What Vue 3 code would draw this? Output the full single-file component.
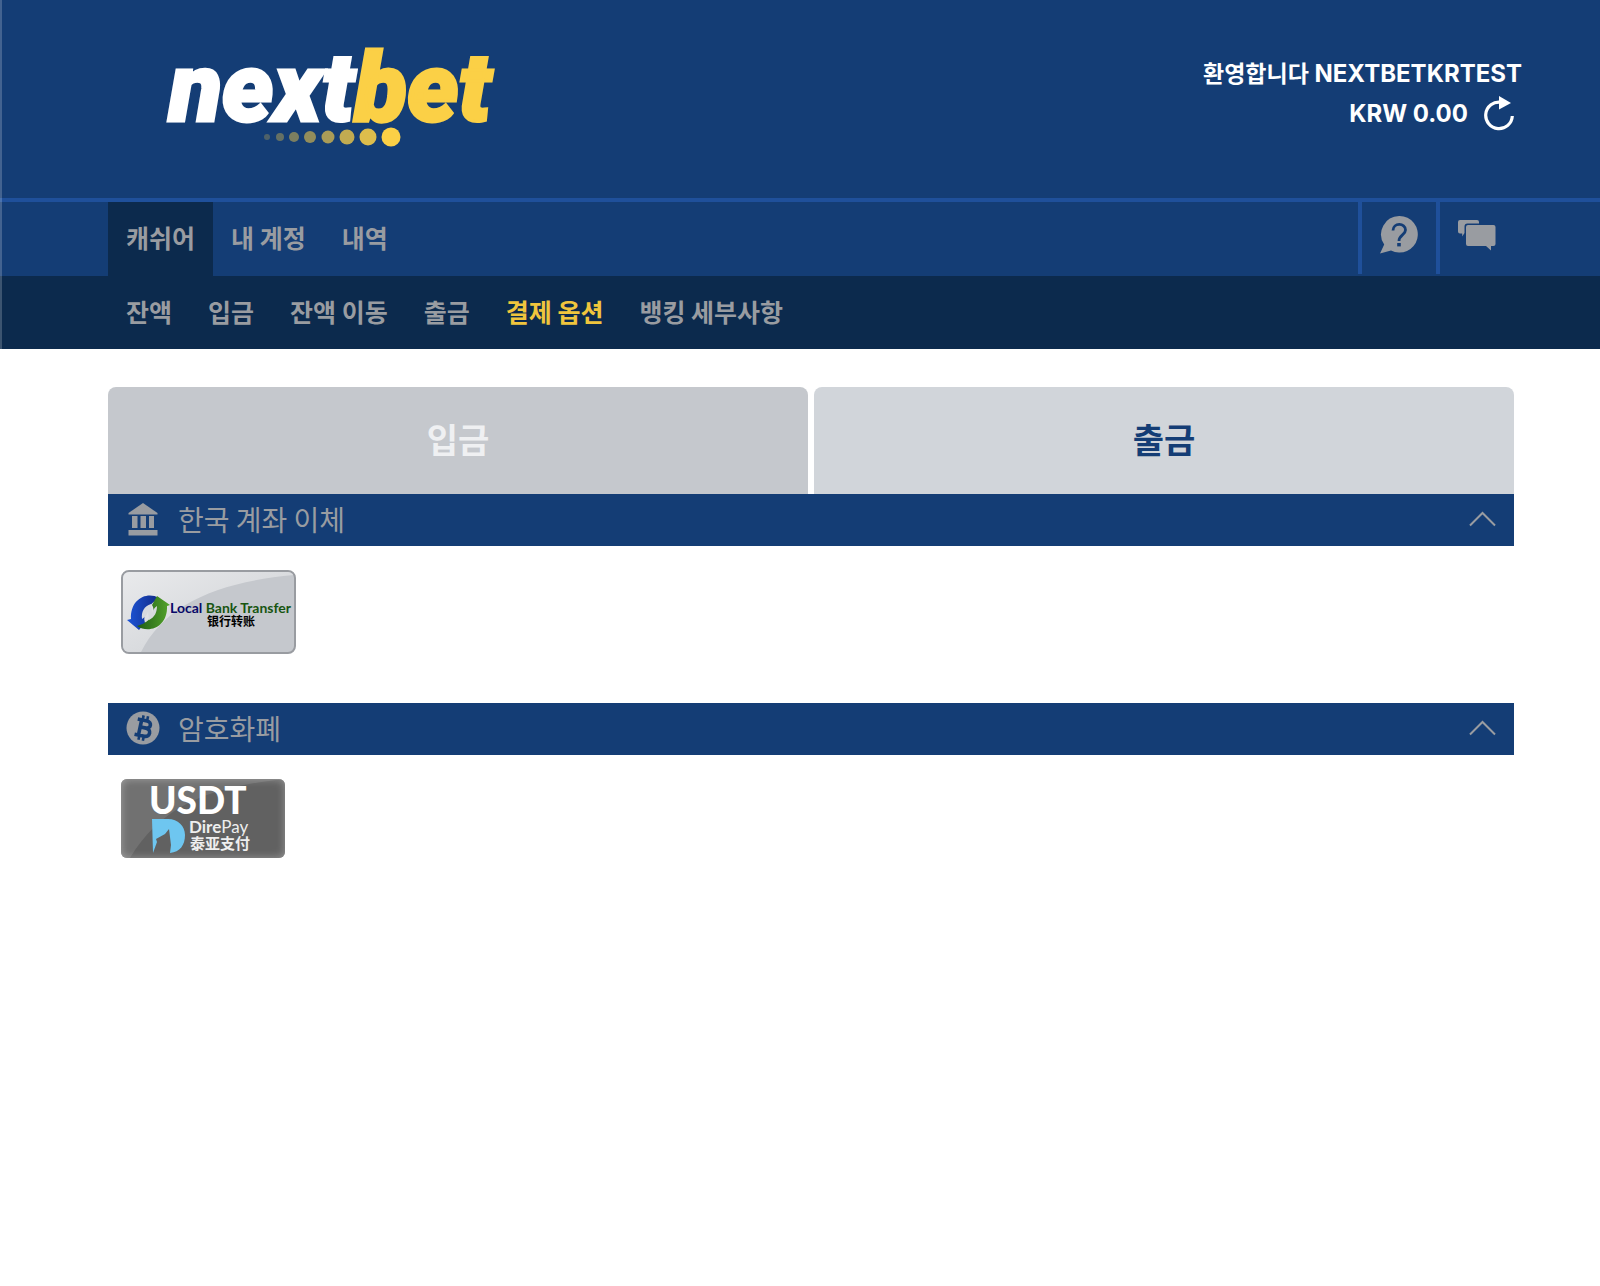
<template>
  <div class="page">
    <div class="masthead">
      <header class="header">
        <a class="logo" href="#" aria-label="nextbet">
          <svg width="340" height="128" viewBox="0 -16 340 128">
            <text class="wordmark" x="5" y="81">next<tspan class="wordmark-bet">bet</tspan></text>
            <circle v-for="dot in dots" :key="dot.x" :cx="dot.x" cy="97" :r="dot.r" :opacity="dot.o" fill="#fbd046" />
          </svg>
        </a>
        <div class="user">
          <div class="welcome"><span class="greeting">환영합니다</span> NEXTBETKRTEST</div>
          <div class="balance">
            <span>KRW {{ balance }}</span>
            <button class="refresh" aria-label="새로고침" @click="refresh">
              <svg width="30" height="36" viewBox="0 0 30 36">
                <path d="M17 6.2A13.3 13.3 0 1 0 28.3 20" fill="none" stroke="#fff" stroke-width="3.2" />
                <path d="M15 0 27 7 15 13.5z" fill="#fff" />
              </svg>
            </button>
          </div>
        </div>
      </header>

      <nav class="main-nav">
        <a v-for="item in mainNav" :key="item" href="#" :class="{ active: item === activeMain }" @click.prevent="activeMain = item">{{ item }}</a>
        <div class="tools">
          <button aria-label="도움말">
            <svg width="38" height="38" viewBox="0 0 38 38">
              <path d="M19.5 0a18.3 18.3 0 1 1-8.500 34.500L0 37.500l4.200-9A18.300 18.300 0 0 1 19.500 0z" fill="#999ca1" />
              <path d="M13 14.500c0-8 12.500-8 12.500-.5 0 5-6.500 5-6.500 11" fill="none" stroke="#143d75" stroke-width="2.800" />
              <path d="M17.200 27h3.600v3.400h-3.600z" fill="#143d75" />
            </svg>
          </button>
          <button aria-label="채팅">
            <svg width="38" height="38" viewBox="0 0 38 38">
              <path d="M2 4h17a2 2 0 0 1 2 2v1.500H9.500a3 3 0 0 0-3 3V17l-2.300 3.500V17.500H2a2 2 0 0 1-2-2V6a2 2 0 0 1 2-2z" fill="#999ca1" />
              <path d="M10 9h25.500a2 2 0 0 1 2 2v17a2 2 0 0 1-2 2H33v4.500L28 30H10a2 2 0 0 1-2-2V11a2 2 0 0 1 2-2z" fill="#999ca1" />
            </svg>
          </button>
        </div>
      </nav>

      <nav class="sub-nav">
        <a v-for="item in subNav" :key="item" href="#" :class="{ active: item === activeSub }" @click.prevent="activeSub = item">{{ item }}</a>
      </nav>
    </div>

    <main class="content">
      <div class="tabs">
        <button v-for="tab in tabs" :key="tab" :class="{ active: tab === activeTab }" @click="activeTab = tab">{{ tab }}</button>
      </div>

      <section class="group">
        <button class="group-header" @click="open.bank = !open.bank">
          <svg width="34" height="34" viewBox="0 0 34 34" fill="#999ca1">
            <path d="M17 1 31.500 11v1.500h-29V11z" />
            <path d="M6 14h5.500v12H6zM14.500 14H20v12h-5.500zM23 14h5v12h-5zM2.500 28h29v5.500h-29z" />
          </svg>
          <span>한국 계좌 이체</span>
          <svg class="chevron" width="28" height="16" viewBox="0 0 28 16"><path d="M2 14.500 14.500 2 27 14.500" /></svg>
        </button>
        <div v-if="open.bank" class="methods">
          <button class="method bank" aria-label="Local Bank Transfer">
            <svg width="171" height="80" viewBox="0 0 171 80">
              <defs>
                <linearGradient id="shine" x1="0" y1="0" x2="1" y2="1">
                  <stop offset="0" stop-color="#e9eaec" />
                  <stop offset="1" stop-color="#cbced2" />
                </linearGradient>
                <linearGradient id="blue" x1="0" y1="0" x2="1" y2="0">
                  <stop offset="0" stop-color="#1d55d8" />
                  <stop offset="1" stop-color="#112a86" />
                </linearGradient>
                <linearGradient id="green" x1="0" y1="0" x2="1" y2="0">
                  <stop offset="0" stop-color="#1f5c16" />
                  <stop offset="1" stop-color="#55a52b" />
                </linearGradient>
              </defs>
              <path d="M0 0h171v3C95 10 42 32 18 80H0z" fill="url(#shine)" />
              <path d="M36 26C24 19 7 27 8 47l-4 1 12 10 6-7c-3-9 4-19 14-25z" fill="url(#blue)" />
              <path d="M14 54c12 8 31 1 30-20l3-1-13-9-5 9c5 8-3 18-15 21z" fill="url(#green)" />
              <path d="M19 47c-1-7 2-13 9-15l1 9c1-3 2-5 5-7 0 6-2 11-8 14l-1-8c-1 3-3 5-6 7z" fill="#d7dade" />
              <text class="bank-name" x="47" y="41" fill="#080868">Local <tspan fill="#175510">Bank Transfer</tspan></text>
              <text class="bank-cn" x="84" y="54">银行转账</text>
            </svg>
          </button>
        </div>
      </section>

      <section class="group">
        <button class="group-header" @click="open.crypto = !open.crypto">
          <svg width="34" height="34" viewBox="0 0 34 34">
            <circle cx="17" cy="17" r="16.500" fill="#999ca1" />
            <g transform="rotate(12 17 17)" fill="none" stroke="#143d75">
              <path d="M10 9.200h9.500c5.500 0 5.500 7.300 0 7.300h-5 5.500c6 0 6 8.300 0 8.300H10M14 9v15.800" stroke-width="3.600" />
              <path d="M15 4.500V9M19.500 4.500V9M15 25v4.500M19.500 25v4.500" stroke-width="2.600" />
            </g>
          </svg>
          <span>암호화폐</span>
          <svg class="chevron" width="28" height="16" viewBox="0 0 28 16"><path d="M2 14.500 14.500 2 27 14.500" /></svg>
        </button>
        <div v-if="open.crypto" class="methods">
          <button class="method usdt" aria-label="USDT DirePay">
            <svg width="164" height="79" viewBox="0 0 164 79">
              <path d="M0 0h164C90 8 42 25 9 79H0z" fill="#fff" opacity=".1" />
              <text class="usdt-name" x="28" y="35">USDT</text>
              <path d="M31 40h16c10 0 17 7 17 16 0 10-5 17-15 18l1-8-2-16-4 5-9 5 1 3-4 11z" fill="#6ec6f0" />
              <text class="dire" x="68" y="54"><tspan class="dire-bold">Dire</tspan>Pay</text>
              <text class="dire-cn" x="69" y="70">泰亚支付</text>
            </svg>
          </button>
        </div>
      </section>
    </main>
  </div>
</template>

<script setup>
import { ref, reactive } from 'vue'

const mainNav = ['캐쉬어', '내 계정', '내역']
const subNav = ['잔액', '입금', '잔액 이동', '출금', '결제 옵션', '뱅킹 세부사항']
const tabs = ['입금', '출금']

const activeMain = ref('캐쉬어')
const activeSub = ref('결제 옵션')
const activeTab = ref('입금')
const balance = ref('0.00')
const open = reactive({ bank: true, crypto: true })

// logo dots, growing to the right
const dots = [
  { x: 103, r: 3, o: 0.25 },
  { x: 116, r: 4, o: 0.35 },
  { x: 130, r: 5, o: 0.45 },
  { x: 146, r: 6, o: 0.55 },
  { x: 164, r: 6.5, o: 0.65 },
  { x: 183, r: 7.5, o: 0.75 },
  { x: 204, r: 8.5, o: 0.87 },
  { x: 227, r: 9.5, o: 1 }
]

function refresh() {
  balance.value = Number(balance.value).toFixed(2)
}
</script>

<style>
body {
  background: #fff;
}
</style>

<style scoped>
.page {
  font-family: Inter, "Noto Sans CJK KR", sans-serif;
}

button {
  margin: 0;
  padding: 0;
  border: 0;
  background: none;
  font-family: inherit;
  cursor: pointer;
}

svg {
  display: block;
}

.masthead {
  position: relative;
  background: #143d75;
}

.masthead::after {
  content: "";
  position: absolute;
  top: 0;
  bottom: 0;
  left: 0;
  width: 2px;
  background: rgba(255, 255, 255, 0.2);
}

.header {
  display: flex;
  justify-content: space-between;
  align-items: flex-start;
  padding: 24px 78px 46px 164px;
  border-bottom: 4px solid #1f509b;
}

.wordmark {
  font-family: Roboto, sans-serif;
  font-weight: 900;
  font-style: italic;
  font-size: 97px;
  fill: #fff;
  stroke: #fff;
  stroke-width: 3;
}

.wordmark-bet {
  fill: #fbd046;
  stroke: #fbd046;
}

.user {
  padding-top: 30px;
  color: #fff;
  font-size: 24px;
  font-weight: 700;
  line-height: 40px;
  text-align: right;
}

.greeting {
  font-size: 23px;
}

.balance {
  display: flex;
  justify-content: flex-end;
  align-items: center;
  gap: 16px;
  padding-right: 8px;
}

.main-nav,
.sub-nav {
  display: flex;
  padding: 0 86px 0 108px;
  font-family: "Noto Sans CJK KR", sans-serif;
  font-size: 25px;
  font-weight: 700;
  line-height: 70px;
}

.main-nav a,
.sub-nav a {
  padding: 0 18px 4px;
  color: #999ca1;
  text-decoration: none;
}

.main-nav .active,
.sub-nav {
  background: #0c2a4d;
}

.sub-nav .active {
  color: #f0c53d;
}

.sub-nav a {
  padding-bottom: 3px;
}

.tools {
  display: flex;
  height: 72px;
  margin-left: auto;
}

.tools button {
  display: flex;
  justify-content: center;
  width: 78px;
  padding-top: 14px;
  border-left: 4px solid #1f509b;
}

.content {
  padding: 38px 86px 0 108px;
}

.tabs {
  display: flex;
  gap: 6px;
}

.tabs button {
  flex: 1;
  height: 107px;
  padding-bottom: 4px;
  border-radius: 8px 8px 0 0;
  background: #d1d5da;
  color: #143d75;
  font-family: "Noto Sans CJK KR", sans-serif;
  font-size: 34px;
  font-weight: 700;
}

.tabs .active {
  background: #c5c8cd;
  color: #eff0f2;
}

.group-header {
  display: flex;
  align-items: center;
  gap: 18px;
  width: 100%;
  height: 52px;
  padding: 0 18px 2px;
  background: #143d75;
  color: #999ca1;
  font-family: "Noto Sans CJK KR", sans-serif;
  font-size: 28px;
}

.chevron {
  margin-left: auto;
  fill: none;
  stroke: #999ca1;
  stroke-width: 2;
}

.methods {
  padding: 24px 13px 49px;
}

.method {
  display: block;
  overflow: hidden;
  border-radius: 8px;
}

.bank {
  border: 2px solid #999ca1;
  background: #c5c8cd;
}

.usdt {
  border-radius: 6px;
  background: #616161;
  box-shadow: inset 0 0 8px #999;
}

.bank-name {
  font-family: Lato, sans-serif;
  font-size: 14px;
  font-weight: 700;
}

.bank-cn {
  font-family: "Noto Sans CJK SC", sans-serif;
  font-size: 12px;
  font-weight: 700;
}

.usdt-name {
  font-family: Lato, sans-serif;
  font-size: 37px;
  font-weight: 900;
  fill: #fff;
}

.dire {
  font-family: Lato, sans-serif;
  font-size: 17px;
  fill: #eee;
}

.dire-bold {
  font-weight: 700;
}

.dire-cn {
  font-family: "Noto Sans CJK SC", sans-serif;
  font-size: 15px;
  font-weight: 700;
  fill: #eee;
}
</style>
